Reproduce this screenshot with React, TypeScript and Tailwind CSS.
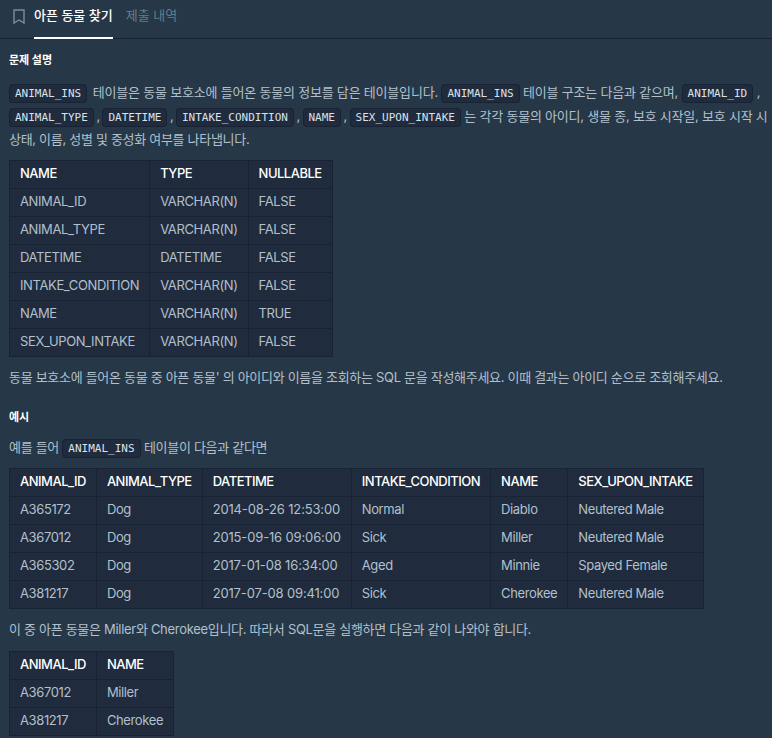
import React from 'react'

const SCHEMA = [
  ['ANIMAL_ID', 'VARCHAR(N)', 'FALSE'],
  ['ANIMAL_TYPE', 'VARCHAR(N)', 'FALSE'],
  ['DATETIME', 'DATETIME', 'FALSE'],
  ['INTAKE_CONDITION', 'VARCHAR(N)', 'FALSE'],
  ['NAME', 'VARCHAR(N)', 'TRUE'],
  ['SEX_UPON_INTAKE', 'VARCHAR(N)', 'FALSE'],
]

const EXAMPLE = [
  ['A365172', 'Dog', '2014-08-26 12:53:00', 'Normal', 'Diablo', 'Neutered Male'],
  ['A367012', 'Dog', '2015-09-16 09:06:00', 'Sick', 'Miller', 'Neutered Male'],
  ['A365302', 'Dog', '2017-01-08 16:34:00', 'Aged', 'Minnie', 'Spayed Female'],
  ['A381217', 'Dog', '2017-07-08 09:41:00', 'Sick', 'Cherokee', 'Neutered Male'],
]

const RESULT = [
  ['A367012', 'Miller'],
  ['A381217', 'Cherokee'],
]

function Code({ children, className = '' }: { children: React.ReactNode; className?: string }) {
  return (
    <code className={`rounded-[4px] border border-[#172334] bg-[#202b3d] px-[5px] py-[2px] text-[11px] leading-none tracking-normal text-[#d7e2eb] [font-family:'DejaVu_Sans_Mono','Liberation_Mono',monospace] [word-spacing:0] ${className}`}>
      {children}
    </code>
  )
}

function DataTable({ head, rows }: { head: string[]; rows: string[][] }) {
  return (
    <table className="border-collapse bg-[#202b3d] text-[13px] leading-[18px]">
      <thead>
        <tr>
          {head.map(h => (
            <th key={h} className="h-[28px] border border-[#172334] px-[10px] pb-[2px] text-left font-medium tracking-[-0.5px] whitespace-nowrap text-white">
              {h}
            </th>
          ))}
        </tr>
      </thead>
      <tbody>
        {rows.map(r => (
          <tr key={r.join()}>
            {r.map((c, i) => (
              <td
                key={i}
                className={[
                  'h-[28px] border border-[#172334] px-[10px] pb-[2px] whitespace-nowrap text-[#b2c0cc]',
                  /^\d{4}-/.test(c) ? 'tracking-[-0.15px]' : 'tracking-[-0.38px]',
                ].join(' ')}
              >
                {c}
              </td>
            ))}
          </tr>
        ))}
      </tbody>
    </table>
  )
}

export default function App() {
  return (
    <div className="h-[738px] w-[772px] overflow-hidden bg-[#263747] text-[13px] text-[#b2c0cc] [font-family:Inter,'Noto_Sans_CJK_KR',sans-serif]">
      {/* Tabs */}
      <div className="flex h-[39px] items-start border-b border-[#172334] pl-[13px]">
        <svg className="mt-[9px]" width="12" height="15" viewBox="0 0 12 15" fill="none" stroke="#78909c" strokeWidth="1.4">
          <path d="M1 1h10v13L6 11l-5 3z" />
        </svg>
        <div className="ml-[9px] h-[39px] border-b-2 border-white pt-[5px] text-[13px] leading-[20px] font-medium text-white">
          아픈 동물 찾기
        </div>
        <div className="ml-[13px] pt-[5px] text-[13px] leading-[20px] text-[#5f7f90]">제출 내역</div>
      </div>

      <div className="px-[9px]">
        <h5 className="mt-[14px] text-[11px] leading-[14px] font-bold text-white">문제 설명</h5>

        <p className="mt-[14px] leading-[23.5px] whitespace-nowrap">
          <span className="tracking-[-0.2px]">
            <Code className="mr-[2px]">ANIMAL_INS</Code> 테이블은 동물 보호소에 들어온 동물의 정보를 담은 테이블입니다. <Code>ANIMAL_INS</Code> 테이블 구조는 다음과 같으며, <Code>ANIMAL_ID</Code> ,
          </span>
          <br />
          <span className="tracking-[-0.3px] [word-spacing:-0.8px]">
            <Code>ANIMAL_TYPE</Code> , <Code>DATETIME</Code> , <Code>INTAKE_CONDITION</Code> , <Code>NAME</Code> , <Code>SEX_UPON_INTAKE</Code>
          </span>
          <span className="tracking-[-0.22px]"> 는 각각 동물의 아이디, 생물 종, 보호 시작일, 보호 시작 시</span>
          <br />
          <span className="tracking-[-0.3px]">상태, 이름, 성별 및 중성화 여부를 나타냅니다.</span>
        </p>

        <div className="mt-[8px]">
          <DataTable head={['NAME', 'TYPE', 'NULLABLE']} rows={SCHEMA} />
        </div>

        <p className="mt-[9px] leading-[23px] tracking-[-0.3px]">
          동물 보호소에 들어온 동물 중 아픈 동물' 의 아이디와 이름을 조회하는 SQL 문을 작성해주세요. 이때 결과는 아이디 순으로 조회해주세요.
        </p>

        <h5 className="mt-[21px] text-[11px] leading-[14px] font-bold text-white">예시</h5>

        <p className="mt-[12px] leading-[23px] tracking-[-0.3px]">
          예를 들어 <Code>ANIMAL_INS</Code> 테이블이 다음과 같다면
        </p>

        <div className="mt-[9px]">
          <DataTable head={['ANIMAL_ID', 'ANIMAL_TYPE', 'DATETIME', 'INTAKE_CONDITION', 'NAME', 'SEX_UPON_INTAKE']} rows={EXAMPLE} />
        </div>

        <p className="mt-[9px] leading-[23px] tracking-[-0.3px]">
          이 중 아픈 동물은 Miller와 Cherokee입니다. 따라서 SQL문을 실행하면 다음과 같이 나와야 합니다.
        </p>

        <div className="mt-[10px]">
          <DataTable head={['ANIMAL_ID', 'NAME']} rows={RESULT} />
        </div>
      </div>
    </div>
  )
}
